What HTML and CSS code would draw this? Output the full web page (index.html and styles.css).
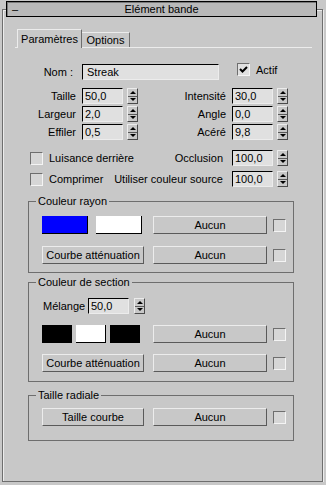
FILE: index.html
```html
<!DOCTYPE html>
<html lang="fr">
<head>
    <meta charset="UTF-8">
    <meta name="viewport" content="width=device-width, initial-scale=1.0">
    <title>Elément bande</title>
    <link rel="stylesheet" href="styles.css">
</head>
<body>
    <div class="rollout">
        <div class="rollout-title">
            <span class="collapse">–</span>
            <span class="title-text">Elément bande</span>
            <span></span>
        </div>

        <div class="tabs">
            <div class="tab tab-active">Paramètres</div>
            <div class="tab">Options</div>
        </div>

        <div class="row row-name">
            <span class="label label-name">Nom :</span>
            <span class="field field-name">Streak</span>
            <span class="check check-on">
                <svg width="9" height="9" viewBox="0 0 9 9"><polyline points="1,4 3.5,6.5 8,2" fill="none" stroke="#000" stroke-width="2"/></svg>
            </span>
            <span class="check-text">Actif</span>
        </div>

        <div class="params">
            <div class="row">
                <span class="label">Taille</span>
                <span class="field">50,0</span>
                <span class="spin"></span>
                <span class="label label-right">Intensité</span>
                <span class="field">30,0</span>
                <span class="spin"></span>
            </div>
            <div class="row">
                <span class="label">Largeur</span>
                <span class="field">2,0</span>
                <span class="spin"></span>
                <span class="label label-right">Angle</span>
                <span class="field">0,0</span>
                <span class="spin"></span>
            </div>
            <div class="row">
                <span class="label">Effiler</span>
                <span class="field">0,5</span>
                <span class="spin"></span>
                <span class="label label-right">Acéré</span>
                <span class="field">9,8</span>
                <span class="spin"></span>
            </div>
        </div>

        <div class="row row-option row-glow">
            <span class="check"></span>
            <span class="check-text">Luisance derrière</span>
            <span class="label label-fill">Occlusion</span>
            <span class="field">100,0</span>
            <span class="spin"></span>
        </div>
        <div class="row row-option">
            <span class="check"></span>
            <span class="check-text">Comprimer</span>
            <span class="label label-fill">Utiliser couleur source</span>
            <span class="field">100,0</span>
            <span class="spin"></span>
        </div>

        <fieldset class="group group-ray">
            <legend>Couleur rayon</legend>
            <div class="group-body">
                <div class="group-row">
                    <div class="swatches">
                        <span class="swatch swatch-blue"></span>
                        <span class="swatch swatch-white"></span>
                    </div>
                    <span class="button">Aucun</span>
                    <span class="check"></span>
                </div>
                <div class="group-row">
                    <span class="button button-wide">Courbe atténuation</span>
                    <span class="button">Aucun</span>
                    <span class="check"></span>
                </div>
            </div>
        </fieldset>

        <fieldset class="group group-section">
            <legend>Couleur de section</legend>
            <div class="group-body">
                <div class="row row-mix">
                    <span class="mix-label">Mélange</span>
                    <span class="field">50,0</span>
                    <span class="spin"></span>
                </div>
                <div class="group-row">
                    <div class="swatches swatches-three">
                        <span class="swatch swatch-small swatch-black"></span>
                        <span class="swatch swatch-small swatch-white"></span>
                        <span class="swatch swatch-small swatch-black"></span>
                    </div>
                    <span class="button">Aucun</span>
                    <span class="check"></span>
                </div>
                <div class="group-row">
                    <span class="button button-wide">Courbe atténuation</span>
                    <span class="button">Aucun</span>
                    <span class="check"></span>
                </div>
            </div>
        </fieldset>

        <fieldset class="group group-radial">
            <legend>Taille radiale</legend>
            <div class="group-body">
                <div class="group-row">
                    <span class="button button-wide">Taille courbe</span>
                    <span class="button">Aucun</span>
                    <span class="check"></span>
                </div>
            </div>
        </fieldset>
    </div>
</body>
</html>
```

FILE: styles.css
```css
body {
    margin: 0;
    background-color: #c8c8c8;
    font-family: "Liberation Sans", Arial, sans-serif;
    font-size: 11px;
    color: #000;
}

.rollout {
    margin: 9px 3px 0 2px;
    height: 471px;
    border: 1px solid #6e6e6e;
    box-shadow: 1px 1px 0 #ececec, inset 1px 1px 0 #ececec;
}

.rollout-title {
    display: grid;
    grid-template-columns: 16px 1fr 16px;
    align-items: center;
    box-sizing: border-box;
    width: 311px;
    height: 16px;
    margin: -9px 0 0 3px;
    border: 1px solid #000;
    box-shadow: inset 1px 1px 0 #7a7a7a;
    background-color: #b9b9b9;
    line-height: 14px;
}

.collapse {
    padding-left: 5px;
}

.title-text {
    text-align: center;
}

/* tab strip */
.tabs {
    display: flex;
    align-items: flex-end;
    box-sizing: border-box;
    width: 297px;
    height: 19px;
    margin: 12px 0 0 12px;
    padding-left: 2px;
    border-bottom: 1px solid #ececec;
}

.tab {
    box-sizing: border-box;
    width: 48px;
    height: 15px;
    border-top: 1px solid #ececec;
    border-right: 1px solid #6e6e6e;
    text-align: center;
    line-height: 14px;
}

.tab-active {
    width: 65px;
    height: 19px;
    margin-bottom: -1px;
    border-left: 1px solid #ececec;
    background-color: #c8c8c8;
    line-height: 18px;
}

/* form rows */
.row {
    display: flex;
    align-items: center;
}

.row-name {
    align-items: flex-start;
    margin-top: 15px;
}

.label {
    box-sizing: border-box;
    width: 73px;
    margin-right: 6px;
    text-align: right;
    white-space: nowrap;
}

.label-name {
    padding-right: 3px;
    margin-top: 3px;
}

.label-right {
    width: 88px;
}

.field {
    box-sizing: border-box;
    width: 41px;
    height: 16px;
    padding-left: 2px;
    border: 1px solid;
    border-color: #000 #ececec #ececec #000;
    background-color: #e0e0e0;
    line-height: 14px;
    white-space: nowrap;
}

.field-name {
    width: 137px;
    margin-top: 1px;
    padding-left: 4px;
}

.spin {
    display: flex;
    flex-direction: column;
    align-items: center;
    justify-content: center;
    gap: 4px;
    box-sizing: border-box;
    width: 11px;
    height: 16px;
    margin-left: 4px;
    border: 1px solid;
    border-color: #ececec #4a4a4a #4a4a4a #ececec;
    background: linear-gradient(#5a5a5a, #5a5a5a) center / 9px 1px no-repeat, #c8c8c8;
}

.spin::before {
    content: "";
    border-left: 3px solid transparent;
    border-right: 3px solid transparent;
    border-bottom: 3px solid #000;
}

.spin::after {
    content: "";
    border-left: 3px solid transparent;
    border-right: 3px solid transparent;
    border-top: 3px solid #000;
}

.params {
    display: flex;
    flex-direction: column;
    gap: 2px;
    margin-top: 8px;
}

.check {
    display: flex;
    align-items: center;
    justify-content: center;
    box-sizing: border-box;
    width: 13px;
    height: 13px;
    border: 1px solid;
    border-color: #6e6e6e #f4f4f4 #f4f4f4 #6e6e6e;
    background-color: #d6d6d6;
}

.check-on {
    margin-left: 18px;
    background-color: #e0e0e0;
}

.check-text {
    margin-left: 6px;
    white-space: nowrap;
}

.row-name .check-text {
    margin-top: 1px;
}

.row-option {
    padding-right: 34px;
    margin-top: 5px;
}

.row-glow {
    margin-top: 10px;
}

.row-option .check {
    margin-left: 27px;
}

.label-fill {
    flex: 1;
    width: auto;
    margin-right: 9px;
}

/* groups */
.group {
    box-sizing: border-box;
    width: 266px;
    margin: 8px 0 0 25px;
    padding: 0;
    border: 1px solid #6e6e6e;
    min-inline-size: 0;
}

.group legend {
    margin-left: 7px;
    padding: 0 2px;
    line-height: 13px;
}

.group-body {
    padding: 8px 0 8px 13px;
}

.group-row {
    display: grid;
    grid-template-columns: 111px 114px 19px;
    align-items: center;
    margin-top: 12px;
}

.group-row:first-child {
    margin-top: 0;
}

.group-row .check {
    justify-self: end;
}

.swatches {
    display: flex;
    gap: 8px;
}

.swatch {
    box-sizing: border-box;
    width: 46px;
    height: 18px;
    border-right: 1px solid #000;
    border-bottom: 1px solid #000;
}

.swatches-three {
    gap: 4px;
}

.swatch-small {
    width: 30px;
}

.swatch-blue {
    background-color: #0000ff;
}

.swatch-white {
    background-color: #fff;
}

.swatch-black {
    background-color: #000;
}

.button {
    box-sizing: border-box;
    width: 114px;
    height: 18px;
    border: 1px solid;
    border-color: #ececec #5a5a5a #5a5a5a #ececec;
    text-align: center;
    line-height: 16px;
    white-space: nowrap;
}

.button-wide {
    width: 102px;
}

.group-section {
    margin-top: 3px;
}

.group-section .group-body {
    padding-top: 9px;
    padding-bottom: 9px;
}

.group-section .group-row {
    margin-top: 11px;
}

.row-mix {
    margin-bottom: 0;
}

.mix-label {
    width: 46px;
    padding-left: 1px;
    box-sizing: border-box;
}

.row-mix .spin {
    margin-left: 5px;
}

.group-radial {
    margin-top: 7px;
}

.group-radial .group-body {
    padding-top: 6px;
    padding-bottom: 14px;
}
```
